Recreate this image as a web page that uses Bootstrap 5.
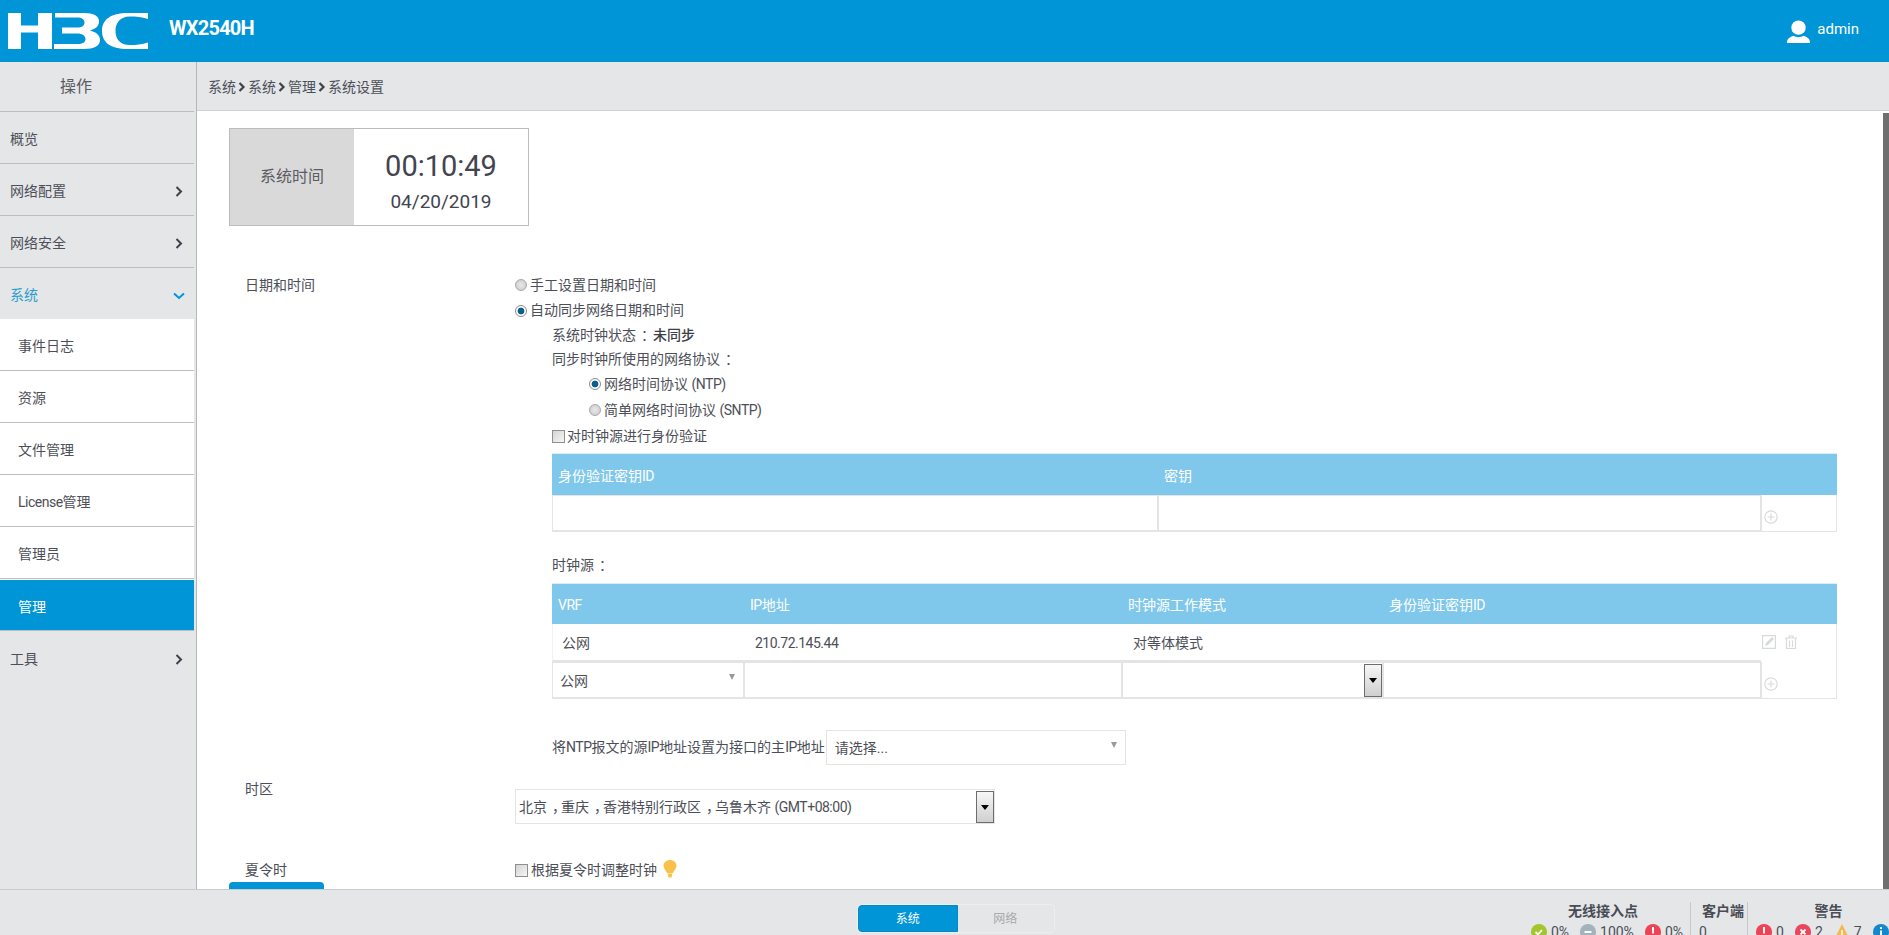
<!DOCTYPE html>
<html lang="zh-CN">
<head>
<meta charset="utf-8">
<title>H3C WX2540H</title>
<link href="https://cdn.jsdelivr.net/npm/bootstrap@5.3.0/dist/css/bootstrap.min.css" rel="stylesheet">
<style>
:root{--blue:#0095d6;--grey:#e4e6e8;--ink:#4d4f58;--line:#e4e4e4}
html,body{height:100%}
body{font-family:Roboto,"Noto Sans CJK SC",sans-serif;font-size:14px;color:var(--ink);background:#fff}
.lt{letter-spacing:-.5px}
.cm{margin-left:5px;margin-right:-5px}
.topbar{height:62px;background:var(--blue);color:#fff;flex:none}
.logo-svg{width:160px;height:62px;flex:none}
.model{font-family:Roboto,sans-serif;font-weight:700;font-size:20px;letter-spacing:-.75px;margin-left:9px;margin-top:-7px}
.user-svg{width:23px;height:23px;margin-right:7px}
.user-name{font-size:15px;margin-right:30px;margin-top:-3px}
.sidebar{width:197px;flex:none;background:var(--grey);border-right:1px solid #b4b6b8;overflow:hidden}
.side-title{height:50px;width:194px;border-bottom:1px solid #bbbdbf;font-size:16px;color:#5a5c63;padding-right:42px}
.list-group-item.mi{height:52px;width:194px;padding:4px 11px 0 10px;background:var(--grey);color:var(--ink);border:0;border-bottom:1px solid #bbbdbf;border-radius:0;display:flex;align-items:center;justify-content:space-between}
.list-group-item.mi.open{color:#2a9dce;border-bottom:0;height:51px}
.list-group-item.mi.subi{background:#fff;padding-left:18px}
.list-group-item.mi.cur{background:var(--blue);color:#fff;border-top:1px solid #fff;border-bottom-color:#bbbdbf}
.chev{width:8px;height:11px;flex:none}
.chev-d{width:12px;height:8px;margin-right:-2px;flex:none}
.crumbs{height:49px;flex:none;background:var(--grey);border-bottom:1px solid #cfd1d3;padding:2px 0 0 11px;gap:2px}
.crumbs svg{width:8px;height:10px;color:#3f414a}
.scroll-thumb{position:absolute;right:0;top:51px;bottom:0;width:6px;background:#6f6f6f}
.pane{padding:17px 0 0 32px;flex:1 1 auto;min-height:0;overflow:hidden}
.timebox{width:300px;height:98px;border:1px solid #bcbcbc}
.time-l{width:124px;background:#d9d9d9;font-size:16px;color:#5a5c63}
.time-r{flex:1;color:#42444f;padding-top:9px}
.clock{font-size:29px;line-height:34px}
.cdate{font-size:19px;line-height:26px;margin-top:6px}
.flab{width:286px;flex:none;padding-left:16px;line-height:26px}
.flab-up{margin-top:-13px}
.sec1{margin-top:46px}
.opt{height:26px;gap:3px;white-space:nowrap}
.opt.h25{height:25px}
.opt.h24{height:24px}
.ind1{margin-left:37px}
.ind2{margin-left:74px}
.rd{appearance:none;width:12px;height:12px;border-radius:50%;margin:0;flex:none;background:radial-gradient(circle,#e9e9e9 0,#d2d2d2 70%);border:1px solid #a9a9a9}
.rd:checked{background:radial-gradient(circle,#0a5f8c 0,#0a5f8c 45%,#fff 52%);border-color:#8a8a8a}
.cb{appearance:none;width:13px;height:13px;margin:0;flex:none;background:linear-gradient(135deg,#d4d4d4,#f6f6f6);border:1px solid #8f8f8f}
.strong-v{font-weight:500;color:#3c3e47;margin-left:0}
.dt{width:1285px;table-layout:fixed;margin:0;--bs-table-bg:transparent;--bs-table-color:var(--ink);border-collapse:separate;border-spacing:0}
.dt th{background:#7fc8eb;color:#fff;font-weight:400;padding:0 0 0 6px;border:0;border-top:1px solid #dbeef8;box-shadow:none;vertical-align:middle;padding-top:3px}
.dt td{padding:0;border:0;box-shadow:none;vertical-align:middle}
.dt .h-head{height:42px}
.dt2 .h-head{height:41px}
.dt .h-row{height:37px}
.dt .h-txt{height:38px}
.dt .h-txt td{border-bottom:2px solid var(--line);padding:2px 0 0 11px}
.dt .h-txt td.first{border-left:1px solid #f2f2f2;padding-left:9px}
.dt .h-txt td.acts{border-right:1px solid var(--line);border-bottom:0;padding:0 0 2px 1px}
.dt td.act-cell{border-left:1px solid var(--line);border-right:1px solid var(--line);border-bottom:1px solid var(--line);padding:8px 0 0 2px}
.ficon{width:14px;height:14px;display:block;color:#d8dadc}
.aicons{gap:8px}
.c1a{width:606px}.c1b{width:603px}.c1c{width:76px}
.c2a{width:192px}.c2b{width:378px}.c2c{width:261px}.c2d{width:378px}.c2e{width:76px}
.dt .form-control{display:block;height:37px;border:1px solid var(--line);border-bottom-width:2px;border-radius:0;padding:0 6px;box-shadow:none}
.xsel{height:37px;border:1px solid var(--line);border-bottom-width:2px;background:#fff;align-items:center;color:var(--ink)}
.xsel-text{flex:1;min-width:0;white-space:nowrap;padding-top:2px}
.xbtn{width:18px;align-self:stretch;flex:none;border:1px solid #6d6d6d;background:linear-gradient(#f7f7f7,#cfcfcf);display:flex;align-items:center;justify-content:center;margin-top:1px}
.xbtn::after,.tri::after{content:"";display:block;border-style:solid;border-color:#000 transparent transparent;border-width:5px 4px 0}
.tri{flex:none;margin-right:8px;margin-top:-6px}
.tri::after{border-color:#9a9a9a transparent transparent;border-width:6px 3.5px 0}
.vrf{padding-left:7px}
.clk-lab{margin-top:21px;height:24px;line-height:24px;margin-bottom:6px}
.ntp-line{margin-top:31px;height:35px}
.ntp-sel{width:300px;height:35px;margin-left:1px;padding-left:8px;border-width:1px}
.tz-row{margin-top:24px}
.tz-sel{width:480px;height:35px;padding-left:3px;border-width:1px}
.dst-row{margin-top:33px}
.bulb{width:14px;height:18px;margin-left:3px;margin-top:-3px}
.apply{width:95px;height:32px;display:block;background:var(--blue);border:0;border-radius:4px 4px 0 0;margin-top:-1px}
.botbar{height:46px;flex:none;background:var(--grey);border-top:1px solid #c9cbcd;overflow:hidden;position:relative}
.tabs{margin:14px 0 0 857px;height:29px;width:198px;flex:none;border:1px solid #eceef0;border-radius:4px}
.btn.tab-on{width:100px;padding:0;font-size:12px;background:var(--blue);border:1px solid #0a88c2;color:#fff;border-radius:4px}
.btn.tab-off{width:98px;padding:0;font-size:12px;color:#a8aaac;border:0;background:transparent}
.stats{padding-top:12px;margin-left:auto;line-height:1}
.sgroup{border-right:1px solid #c6c8ca;height:40px}
.sgroup:last-child{border:0}
.sh{font-weight:700;color:#4a4c55;text-align:center;height:19px;font-size:14px;line-height:19px}
.sv{height:20px;font-size:14px;align-items:center;margin-top:1px;white-space:nowrap}
.s1{width:165px}
.s1 .sh{padding-right:10px}
.s1 .sv{padding-right:7px}
.s2{width:57px;padding-left:8px}
.s3{width:141px;padding-left:8px}
.s3 .sh{padding-left:12px}
.st{width:16px;height:16px;flex:none;margin-right:4px}
.sp1{margin-right:11px}
.sp2{margin-right:11px}
.sp3{margin-right:11px}
.w-none{white-space:nowrap}
</style>
</head>
<body class="d-flex flex-column overflow-hidden">
<header class="topbar d-flex align-items-center">
  <svg class="logo-svg" viewBox="0 0 160 62" fill="#fff" role="img" aria-label="H3C">
    <path d="M8 13h13v12.500h17V13h14v36H38V32.500H21V49H8z"/>
    <path d="M55 13H84c10 0 15 3 15 8.500 0 4.500-3.500 7.500-9 9 6 1.500 10 4.500 10 9.500 0 6-6 9-16 9H54v-5h23c6 0 8.500-2 8.500-5s-2.500-5.500-8.500-5.500H62v-6h15c5 0 7.500-2 7.500-5 0-3-2.500-5-7.500-5H55z"/>
    <path d="M148 13v6c-6-2-12-2.500-18-2.500-10 0-14.500 6.500-14.500 14.500s4.500 14 14.500 14c6 0 12-.500 18-2.500v6.500h-20c-18 0-26-7-26-18s8-18 26-18z"/>
  </svg>
  <span class="model">WX2540H</span>
  <div class="ms-auto d-flex align-items-center">
    <svg class="user-svg" viewBox="0 0 24 24" fill="#fff" aria-hidden="true"><circle cx="12" cy="8" r="7.500"/><path d="M0 24c0-4 2-6 7-7.500 3 2 7 2 10 0 5 1.500 7 3.500 7 7.500z"/></svg>
    <span class="user-name">admin</span>
  </div>
</header>
<div class="d-flex flex-grow-1" style="min-height:0">
  <nav class="sidebar">
    <div class="side-title d-flex align-items-center justify-content-center">操作</div>
    <div class="list-group list-group-flush">
      <a class="list-group-item mi">概览</a>
      <a class="list-group-item mi">网络配置<svg class="chev" viewBox="0 0 8 11" fill="none" stroke="#3f414a" stroke-width="2"><path d="M1.500 1l4.500 4.500L1.500 10"/></svg></a>
      <a class="list-group-item mi">网络安全<svg class="chev" viewBox="0 0 8 11" fill="none" stroke="#3f414a" stroke-width="2"><path d="M1.500 1l4.500 4.500L1.500 10"/></svg></a>
      <a class="list-group-item mi open">系统<svg class="chev-d" viewBox="0 0 12 8" fill="none" stroke="#0095d6" stroke-width="2"><path d="M1 1.500l5 4.500 5-4.500"/></svg></a>
      <a class="list-group-item mi subi">事件日志</a>
      <a class="list-group-item mi subi">资源</a>
      <a class="list-group-item mi subi">文件管理</a>
      <a class="list-group-item mi subi"><span><span class="lt">License</span>管理</span></a>
      <a class="list-group-item mi subi">管理员</a>
      <a class="list-group-item mi subi cur">管理</a>
      <a class="list-group-item mi">工具<svg class="chev" viewBox="0 0 8 11" fill="none" stroke="#3f414a" stroke-width="2"><path d="M1.500 1l4.500 4.500L1.500 10"/></svg></a>
    </div>
  </nav>
  <div class="flex-grow-1 d-flex flex-column position-relative" style="min-width:0">
    <div class="crumbs d-flex align-items-center">
      <span>系统</span><svg viewBox="0 0 8 10" fill="none" stroke="currentColor" stroke-width="2.200"><path d="M1.500 1l4 4-4 4"/></svg>
      <span>系统</span><svg viewBox="0 0 8 10" fill="none" stroke="currentColor" stroke-width="2.200"><path d="M1.500 1l4 4-4 4"/></svg>
      <span>管理</span><svg viewBox="0 0 8 10" fill="none" stroke="currentColor" stroke-width="2.200"><path d="M1.500 1l4 4-4 4"/></svg>
      <span>系统设置</span>
    </div>
    <main class="pane">
      <div class="timebox d-flex">
        <div class="time-l d-flex align-items-center justify-content-center">系统时间</div>
        <div class="time-r d-flex flex-column align-items-center justify-content-center">
          <div class="clock">00:10:49</div>
          <div class="cdate">04/20/2019</div>
        </div>
      </div>
      <div class="d-flex sec1">
        <div class="flab">日期和时间</div>
        <div>
          <label class="opt d-flex align-items-center"><input class="rd" type="radio" name="m">手工设置日期和时间</label>
          <label class="opt h25 d-flex align-items-center"><input class="rd" type="radio" name="m" checked>自动同步网络日期和时间</label>
          <div class="opt h24 ind1 d-flex align-items-center"><span>系统时钟状态<span class="cm">：</span></span><span class="strong-v">未同步</span></div>
          <div class="opt h24 ind1 d-flex align-items-center"><span>同步时钟所使用的网络协议<span class="cm">：</span></span></div>
          <label class="opt ind2 d-flex align-items-center"><input class="rd" type="radio" name="p" checked><span>网络时间协议 <span class="lt">(NTP)</span></span></label>
          <label class="opt ind2 d-flex align-items-center"><input class="rd" type="radio" name="p"><span>简单网络时间协议 <span class="lt">(SNTP)</span></span></label>
          <label class="opt ind1 d-flex align-items-center" style="gap:2px"><input class="cb" type="checkbox">对时钟源进行身份验证</label>
          <div class="ind1 mt-1">
            <table class="table dt">
              <colgroup><col class="c1a"><col class="c1b"><col class="c1c"></colgroup>
              <thead><tr class="h-head"><th>身份验证密钥<span class="lt">ID</span></th><th>密钥</th><th></th></tr></thead>
              <tbody><tr class="h-row">
                <td><input class="form-control" type="text" aria-label="身份验证密钥ID"></td>
                <td><input class="form-control" type="text" aria-label="密钥"></td>
                <td class="act-cell"><svg class="ficon" viewBox="0 0 14 14" fill="none" stroke="currentColor" stroke-width="1.200"><circle cx="7" cy="7" r="6.200"/><path d="M7 3.500v7M3.500 7h7"/></svg></td>
              </tr></tbody>
            </table>
            <div class="clk-lab">时钟源<span class="cm">：</span></div>
            <table class="table dt dt2">
              <colgroup><col class="c2a"><col class="c2b"><col class="c2c"><col class="c2d"><col class="c2e"></colgroup>
              <thead><tr class="h-head"><th><span class="lt">VRF</span></th><th><span class="lt">IP</span>地址</th><th>时钟源工作模式</th><th>身份验证密钥<span class="lt">ID</span></th><th></th></tr></thead>
              <tbody>
                <tr class="h-txt">
                  <td class="first">公网</td><td><span class="lt">210.72.145.44</span></td><td>对等体模式</td><td></td>
                  <td class="acts"><div class="d-flex aicons align-items-center">
                    <svg class="ficon" viewBox="0 0 14 14" fill="none" stroke="currentColor" stroke-width="1.200"><path d="M.6.600h12.800v12.800H.6z"/><path d="M3 11l1-3 6-6 2 2-6 6z" fill="currentColor" stroke="none"/></svg>
                    <svg class="ficon" viewBox="0 0 14 14" fill="none" stroke="currentColor" stroke-width="1.200"><path d="M1 3h12M5 3V1h4v2M2.500 3.500V13.500h9V3.500M5.500 5.500V12M8.500 5.500V12"/></svg>
                  </div></td>
                </tr>
                <tr class="h-row">
                  <td><div class="xsel vrf d-flex"><span class="xsel-text">公网</span><span class="tri"></span></div></td>
                  <td><input class="form-control" type="text" aria-label="IP地址"></td>
                  <td><div class="xsel d-flex"><span class="xsel-text"></span><span class="xbtn"></span></div></td>
                  <td><input class="form-control" type="text" aria-label="身份验证密钥ID"></td>
                  <td class="act-cell"><svg class="ficon" viewBox="0 0 14 14" fill="none" stroke="currentColor" stroke-width="1.200"><circle cx="7" cy="7" r="6.200"/><path d="M7 3.500v7M3.500 7h7"/></svg></td>
                </tr>
              </tbody>
            </table>
            <div class="ntp-line d-flex align-items-center">
              <span class="w-none">将<span class="lt">NTP</span>报文的源<span class="lt">IP</span>地址设置为接口的主<span class="lt">IP</span>地址</span>
              <div class="xsel ntp-sel d-flex"><span class="xsel-text">请选择...</span><span class="tri"></span></div>
            </div>
          </div>
        </div>
      </div>
      <div class="d-flex tz-row">
        <div class="flab flab-up">时区</div>
        <div class="xsel tz-sel d-flex"><span class="xsel-text">北京<span class="cm">，</span>重庆<span class="cm">，</span>香港特别行政区<span class="cm">，</span>乌鲁木齐 <span class="lt">(GMT+08:00)</span></span><span class="xbtn"></span></div>
      </div>
      <div class="d-flex dst-row">
        <div class="flab">夏令时</div>
        <label class="opt d-flex align-items-center" style="gap:3px"><input class="cb" type="checkbox">根据夏令时调整时钟
          <svg class="bulb" viewBox="0 0 14 18" fill="#f9c14c" aria-hidden="true"><path d="M7 0c3.800 0 6.500 2.600 6.500 5.800 0 3-2.600 4.700-3.500 7.200H4C3.100 10.500.5 8.800.5 5.800.5 2.600 3.200 0 7 0z"/><path d="M4.500 13.500h5L8.500 17.500h-3z"/></svg>
        </label>
      </div>
      <button class="btn apply" type="button" aria-label="应用"></button>
    </main>
    <div class="scroll-thumb"></div>
  </div>
</div>
<footer class="botbar d-flex">
  <div class="tabs btn-group">
    <button class="btn tab-on" type="button">系统</button>
    <button class="btn tab-off" type="button">网络</button>
  </div>
  <div class="stats d-flex">
    <div class="sgroup s1">
      <div class="sh">无线接入点</div>
      <div class="sv d-flex justify-content-end">
        <svg class="st" viewBox="0 0 16 16"><circle cx="8" cy="8" r="8" fill="#a4c62d"/><path d="M4.500 8l2.500 2.500 4-4.500" fill="none" stroke="#fff" stroke-width="1.800"/></svg><span class="sp1">0%</span>
        <svg class="st" viewBox="0 0 16 16"><circle cx="8" cy="8" r="8" fill="#a3b2bc"/><path d="M4.500 8h7" stroke="#fff" stroke-width="2"/></svg><span class="sp2">100%</span>
        <svg class="st" viewBox="0 0 16 16"><circle cx="8" cy="8" r="8" fill="#ee4256"/><path d="M8 3v6.500M8 11v2" stroke="#fff" stroke-width="2"/></svg><span>0%</span>
      </div>
    </div>
    <div class="sgroup s2">
      <div class="sh">客户端</div>
      <div class="sv d-flex">0</div>
    </div>
    <div class="sgroup s3">
      <div class="sh">警告</div>
      <div class="sv d-flex">
        <svg class="st" viewBox="0 0 16 16"><circle cx="8" cy="8" r="8" fill="#ee4256"/><path d="M8 3v6.500M8 11v2" stroke="#fff" stroke-width="2"/></svg><span class="sp3">0</span>
        <svg class="st" viewBox="0 0 16 16"><circle cx="8" cy="8" r="8" fill="#e9455c"/><path d="M5.500 5.500l5 5M10.500 5.500l-5 5" stroke="#fff" stroke-width="1.800"/></svg><span class="sp3">2</span>
        <svg class="st" viewBox="0 0 16 16"><path d="M8 0l8 16H0z" fill="#f7b84a"/><path d="M8 6v5M8 12v2" stroke="#fff" stroke-width="1.600"/></svg><span class="sp3">7</span>
        <svg class="st" viewBox="0 0 16 16"><circle cx="8" cy="8" r="8" fill="#1488cc"/><path d="M8 3v2M8 6.500V13" stroke="#fff" stroke-width="2"/></svg>
      </div>
    </div>
  </div>
</footer>
<script src="https://cdn.jsdelivr.net/npm/bootstrap@5.3.0/dist/js/bootstrap.bundle.min.js"></script>
</body>
</html>
